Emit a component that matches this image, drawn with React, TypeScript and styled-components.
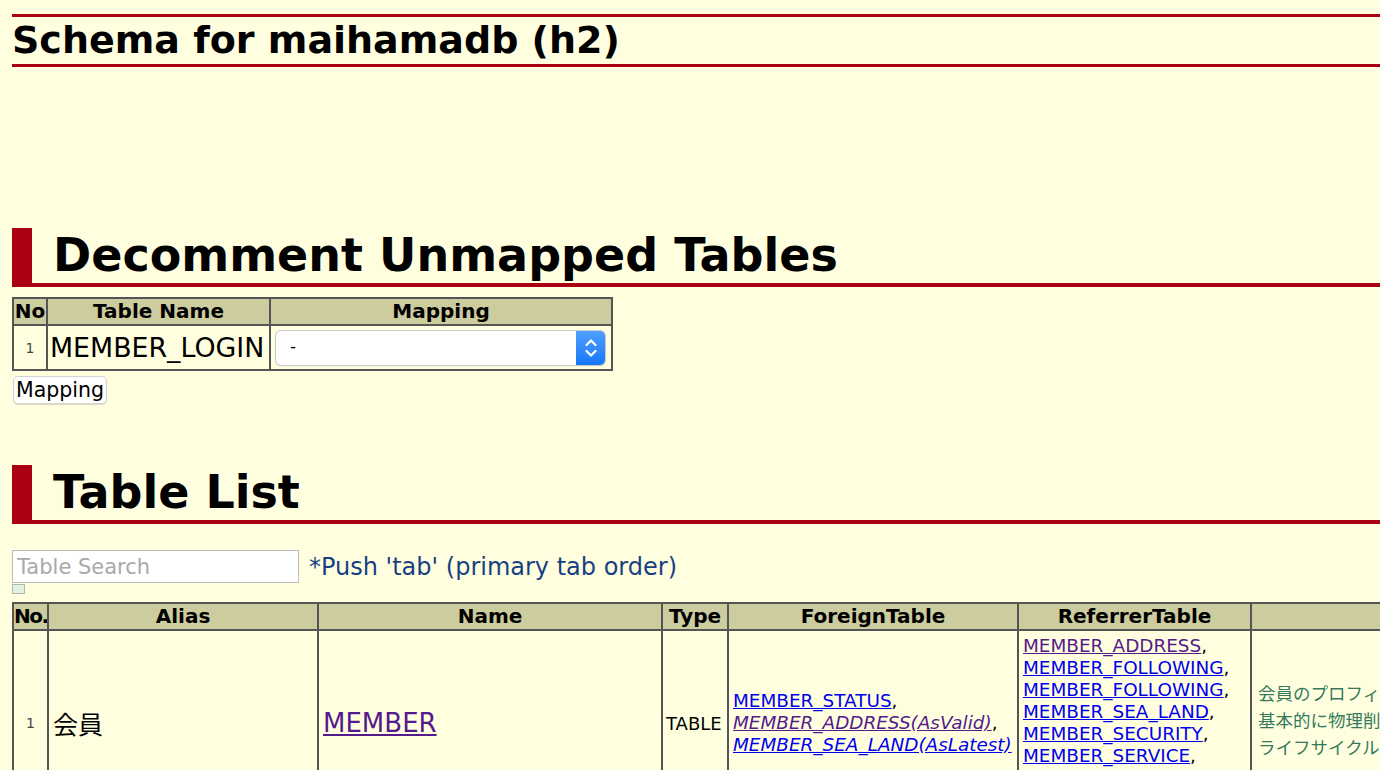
import React from "react";
import styled, { createGlobalStyle } from "styled-components";

const Global = createGlobalStyle`
  html, body { margin: 0; padding: 0; background: #ffffe0; overflow: hidden; }
  body { font-family: "DejaVu Sans", Verdana, "Noto Sans CJK JP", sans-serif; color: #000; }
`;

const Page = styled.div`
  width: 1900px;
  padding: 14px 0 0 12px;
`;

const Title = styled.h1`
  margin: 0;
  border-top: 3px solid #aa0011;
  border-bottom: 3px solid #aa0011;
  font-size: 38px;
  line-height: 47px;
  font-weight: bold;
`;

const Spacer = styled.div`
  height: 161px;
`;

const Section = styled.h2<{ $h: number }>`
  margin: 0;
  border-left: 20px solid #aa0011;
  border-bottom: 4px solid #aa0011;
  padding-left: 21px;
  font-size: 46px;
  line-height: ${(p) => p.$h}px;
  font-weight: bold;
`;

const Grid = styled.table<{ $w: number }>`
  border-collapse: collapse;
  table-layout: fixed;
  width: ${(p) => p.$w}px;
  border: 2px solid #555;
  font-family: "DejaVu Sans", Verdana, "Noto Sans CJK JP", sans-serif;
`;

const Th = styled.th<{ $w: number; $tight?: boolean }>`
  background: #cccc9e;
  border: 2px solid #555;
  font-size: 20px;
  line-height: 25px;
  padding: 0;
  font-weight: bold;
  text-align: center;
  white-space: nowrap;
  overflow: hidden;
  letter-spacing: ${(p) => (p.$tight ? "-1.5px" : "normal")};
  width: ${(p) => p.$w}px;
`;

const Td = styled.td<{ $pad?: string }>`
  border: 2px solid #555;
  padding: ${(p) => p.$pad || "0 2px"};
  vertical-align: middle;
  white-space: nowrap;
  overflow: hidden;
`;

const NoCell = styled(Td)`
  font-size: 14px;
  color: #444;
  text-align: center;
`;

const BigText = styled.span`
  font-size: 26.8px;
`;

const SelectBox = styled.div`
  display: flex;
  width: 329px;
  height: 34px;
  margin: 5px 6px 4px 5px;
  border-radius: 5px;
  background: #fff;
  box-shadow: 0 0 0 1px #c8c8c8, 0 1px 1px rgba(0, 0, 0, 0.2);
  overflow: hidden;
`;

const SelectText = styled.span`
  flex: 1;
  padding-left: 14px;
  font-family: "Liberation Sans", Arial, sans-serif;
  font-size: 18px;
  line-height: 32px;
`;

const SelectArrow = styled.span`
  width: 29px;
  display: flex;
  align-items: center;
  justify-content: center;
  background: linear-gradient(#4fa0ff, #1677fb);
`;

const Button = styled.button`
  display: block;
  margin: 5px 0 0 1px;
  height: 28px;
  padding: 0 2px;
  background: #fff;
  border: 1px solid #d4d4d4;
  border-radius: 5px;
  box-shadow: 0 1px 1px rgba(0, 0, 0, 0.15);
  font-family: "DejaVu Sans", Verdana, sans-serif;
  font-size: 20.5px;
  color: #000;
`;

const Gap = styled.div<{ $h: number }>`
  height: ${(p) => p.$h}px;
`;

const SearchRow = styled.div`
  display: flex;
  align-items: center;
  gap: 10px;
`;

const Search = styled.input`
  width: 287px;
  height: 33px;
  box-sizing: border-box;
  border: 1px solid #bdbdbd;
  background: #fff;
  padding: 0 4px;
  font-family: "DejaVu Sans", Verdana, sans-serif;
  font-size: 21px;
  &::placeholder { color: #a9a9a9; }
`;

const Hint = styled.span`
  color: #173f82;
  font-size: 24px;
`;

const Marker = styled.div`
  width: 11px;
  height: 8px;
  margin-top: 1px;
  background: #dcf5dc;
  border: 1px solid #b5b5b5;
`;

const Link = styled.a<{ $visited?: boolean; $italic?: boolean; $size: number }>`
  color: ${(p) => (p.$visited ? "#551a8b" : "#0000ee")};
  font-style: ${(p) => (p.$italic ? "italic" : "normal")};
  font-size: ${(p) => p.$size}px;
  text-decoration: underline;
`;

const LinkList = styled.div`
  font-size: 18.4px;
  line-height: 22px;
  white-space: nowrap;
`;

const JpText = styled.span`
  font-family: "Noto Sans CJK JP", sans-serif;
  font-size: 25px;
`;

const Comment = styled.div`
  font-family: "Noto Sans CJK JP", sans-serif;
  color: #357a5c;
  font-size: 17.5px;
  line-height: 27px;
  white-space: nowrap;
  padding: 0 0 8px 4px;
`;

const TypeText = styled.span`
  font-size: 18px;
`;

const Chevron = () => (
  <svg width="14" height="22" viewBox="0 0 14 22" fill="none" stroke="#fff" strokeWidth="2.2" strokeLinecap="round" strokeLinejoin="round">
    <path d="M2.5 8 L7 3.5 L11.5 8" />
    <path d="M2.5 14 L7 18.5 L11.5 14" />
  </svg>
);

const referrers: { name: string; visited?: boolean }[] = [
  { name: "MEMBER_ADDRESS", visited: true },
  { name: "MEMBER_FOLLOWING" },
  { name: "MEMBER_FOLLOWING" },
  { name: "MEMBER_SEA_LAND" },
  { name: "MEMBER_SECURITY" },
  { name: "MEMBER_SERVICE" },
  { name: "MEMBER_WITHDRAWAL" },
  { name: "PURCHASE" },
];

export default function App() {
  return (
    <>
      <Global />
      <Page>
        <Title>Schema for maihamadb (h2)</Title>
        <Spacer />
        <Section $h={55}>Decomment Unmapped Tables</Section>
        <Gap $h={10} />
        <Grid $w={601}>
          <thead>
            <tr>
              <Th $w={32}>No</Th>
              <Th $w={221}>Table Name</Th>
              <Th $w={340}>Mapping</Th>
            </tr>
          </thead>
          <tbody>
            <tr>
              <NoCell>1</NoCell>
              <Td $pad="0 2px">
                <BigText>MEMBER_LOGIN</BigText>
              </Td>
              <Td $pad="0">
                <SelectBox>
                  <SelectText>-</SelectText>
                  <SelectArrow>
                    <Chevron />
                  </SelectArrow>
                </SelectBox>
              </Td>
            </tr>
          </tbody>
        </Grid>
        <Button>Mapping</Button>
        <Gap $h={61} />
        <Section $h={55}>Table List</Section>
        <Gap $h={26} />
        <SearchRow>
          <Search placeholder="Table Search" />
          <Hint>*Push 'tab' (primary tab order)</Hint>
        </SearchRow>
        <Marker />
        <Gap $h={8} />
        <Grid $w={1840}>
          <thead>
            <tr>
              <Th $w={33} $tight>No.</Th>
              <Th $w={268}>Alias</Th>
              <Th $w={342}>Name</Th>
              <Th $w={64}>Type</Th>
              <Th $w={288}>ForeignTable</Th>
              <Th $w={231}>ReferrerTable</Th>
              <Th $w={600}></Th>
            </tr>
          </thead>
          <tbody>
            <tr>
              <NoCell>1</NoCell>
              <Td $pad="0 4px">
                <JpText>会員</JpText>
              </Td>
              <Td $pad="0 4px">
                <Link href="#" $visited $size={26}>MEMBER</Link>
              </Td>
              <Td $pad="0 3px">
                <TypeText>TABLE</TypeText>
              </Td>
              <Td $pad="0 4px">
                <LinkList>
                  <Link href="#" $size={18.4}>MEMBER_STATUS</Link>,<br />
                  <Link href="#" $visited $italic $size={18.4}>MEMBER_ADDRESS(AsValid)</Link>,<br />
                  <Link href="#" $italic $size={18.4}>MEMBER_SEA_LAND(AsLatest)</Link>
                </LinkList>
              </Td>
              <Td $pad="4px 4px">
                <LinkList>
                  {referrers.map((r, i) => (
                    <React.Fragment key={i}>
                      <Link href="#" $visited={r.visited} $size={18.4}>{r.name}</Link>
                      {i < referrers.length - 1 ? "," : ""}
                      <br />
                    </React.Fragment>
                  ))}
                </LinkList>
              </Td>
              <Td $pad="0 2px">
                <Comment>
                  会員のプロフィールやアカウントなどの基本情報を保持する。<br />
                  基本的に物理削除はなく、退会したらステータスが退会会員になる。<br />
                  ライフサイクルやカテゴリの違う会員情報は、one-to-oneなどの関連テーブルにて。
                </Comment>
              </Td>
            </tr>
          </tbody>
        </Grid>
      </Page>
    </>
  );
}
